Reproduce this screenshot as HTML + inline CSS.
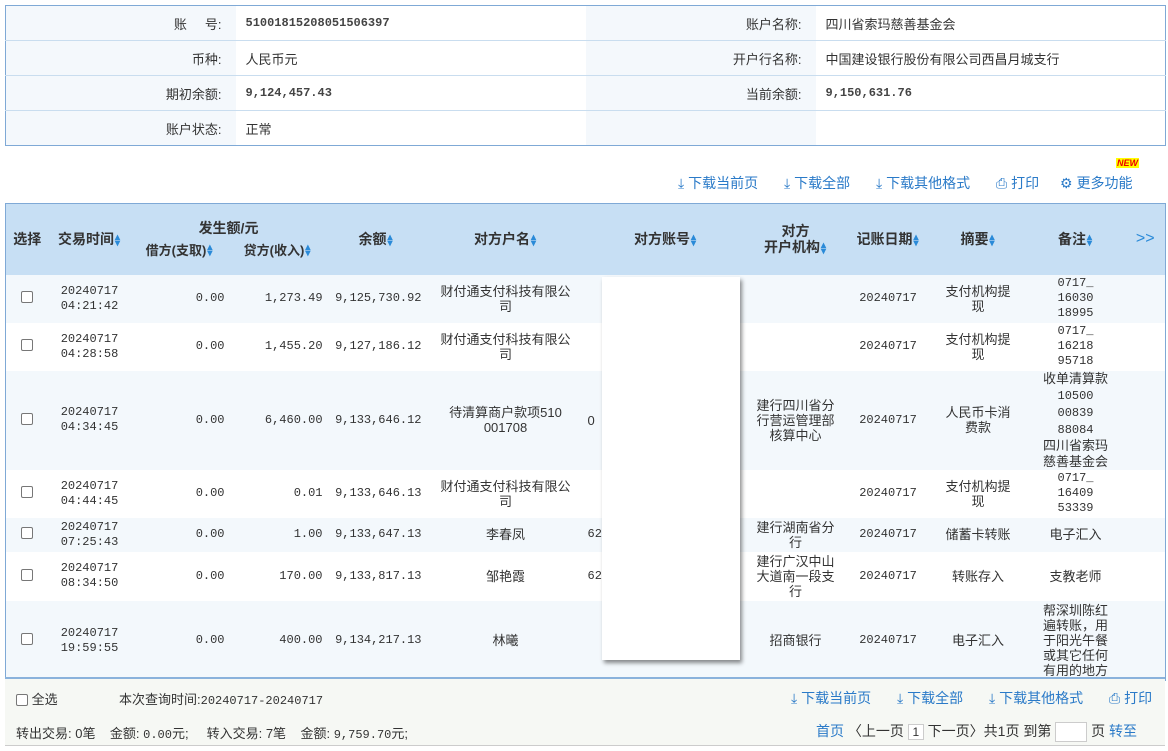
<!DOCTYPE html>
<html><head><meta charset="utf-8">
<style>
*{box-sizing:border-box;margin:0;padding:0}
body{width:1168px;height:751px;background:#fff;font-family:"Liberation Sans","Noto Sans CJK SC",sans-serif;font-size:13px;color:#333;position:relative;overflow:hidden}
.mono{font-family:"Liberation Mono","Noto Sans CJK SC",monospace;font-size:12px}
.info{position:absolute;left:5px;top:5px;width:1160px;border:1px solid #7fa9d6;border-collapse:collapse;table-layout:fixed}
.info td{height:35px;border-top:1px solid #c9ddef;padding:0 10px;white-space:nowrap}
.info tr:first-child td{border-top:none}
.info td.l{background:#f4f8fc;text-align:right;padding-right:14px}
.b{font-weight:bold;color:#444}
.tool{position:absolute;top:173px;color:#2a7ac8;font-size:14px;white-space:nowrap}
.tool span{position:absolute;white-space:nowrap}
.grid{position:absolute;left:5px;top:203px;width:1160px;border:1px solid #7fa9d6;border-bottom:none;border-collapse:collapse;table-layout:fixed}
.grid th{background:#c7dff4;font-weight:bold;color:#333;font-size:14px;padding:0;text-align:center;white-space:nowrap}
.grid td{padding:0 2px;text-align:center;line-height:15px;vertical-align:middle}
.grid tr.a td{background:#f3f8fc}
.s{color:#2a8ad8;font-size:10px;display:inline-block;line-height:6px;vertical-align:middle;width:7px}
.r{text-align:right!important;padding-right:4px!important}
.cb{width:12px;height:12px;border:1px solid #777;border-radius:2px;display:inline-block;background:#fff}
.foot{position:absolute;left:5px;top:677px;width:1160px;height:69px;background:#f6f8f4;border-top:2px solid #8ab2dc;border-bottom:1px solid #ccc}
.foot > span{position:absolute;white-space:nowrap}
.blue{color:#2a7ac8}
</style></head><body>
<table class="info">
<colgroup><col style="width:230px"><col style="width:350px"><col style="width:230px"><col style="width:350px"></colgroup>
<tr><td class="l">账&nbsp;&nbsp;&nbsp;&nbsp;&nbsp;号:</td><td class="b mono">51001815208051506397</td><td class="l">账户名称:</td><td>四川省索玛慈善基金会</td></tr>
<tr><td class="l">币种:</td><td>人民币元</td><td class="l">开户行名称:</td><td>中国建设银行股份有限公司西昌月城支行</td></tr>
<tr><td class="l">期初余额:</td><td class="b mono">9,124,457.43</td><td class="l">当前余额:</td><td class="b mono">9,150,631.76</td></tr>
<tr><td class="l">账户状态:</td><td>正常</td><td class="l"></td><td></td></tr>
</table>

<div class="tool">
<span style="left:678px">⤓ 下载当前页</span>
<span style="left:784px">⤓ 下载全部</span>
<span style="left:876px">⤓ 下载其他格式</span>
<span style="left:996px">⎙ 打印</span>
<span style="left:1060px">⚙ 更多功能</span>
</div>
<div style="position:absolute;left:1116px;top:158px;font-size:9px;font-weight:bold;color:#e00;background:#ff0;line-height:10px;padding:0 1px;font-style:italic">NEW</div>

<table class="grid">
<colgroup><col style="width:43px"><col style="width:82px"><col style="width:98px"><col style="width:98px"><col style="width:99px"><col style="width:160px"><col style="width:160px"><col style="width:100px"><col style="width:85px"><col style="width:95px"><col style="width:100px"><col style="width:40px"></colgroup>
<tr style="height:36px"><th rowspan="2">选择</th><th rowspan="2">交易时间<span class="s">▴<br>▾</span></th><th colspan="2" style="vertical-align:bottom;padding-bottom:2px">发生额/元</th><th rowspan="2">余额<span class="s">▴<br>▾</span></th><th rowspan="2">对方户名<span class="s">▴<br>▾</span></th><th rowspan="2">对方账号<span class="s">▴<br>▾</span></th><th rowspan="2" style="line-height:16px">对方<br>开户机构<span class="s">▴<br>▾</span></th><th rowspan="2">记账日期<span class="s">▴<br>▾</span></th><th rowspan="2">摘要<span class="s">▴<br>▾</span></th><th rowspan="2">备注<span class="s">▴<br>▾</span></th><th rowspan="2" style="color:#2a8ad8;font-weight:normal;font-size:16px">&gt;&gt;</th></tr>
<tr style="height:35px"><th style="vertical-align:top;font-size:13px">借方(支取)<span class="s">▴<br>▾</span></th><th style="vertical-align:top;font-size:13px">贷方(收入)<span class="s">▴<br>▾</span></th></tr>
<tr class="a" style="height:48px"><td><span class="cb"></span></td><td class="mono">20240717<br>04:21:42</td><td class="r mono">0.00</td><td class="r mono">1,273.49</td><td class="r mono">9,125,730.92</td><td>财付通支付科技有限公<br>司</td><td></td><td></td><td class="mono">20240717</td><td>支付机构提<br>现</td><td class="mono">0717_<br>16030<br>18995</td><td></td></tr>
<tr style="height:48px"><td><span class="cb"></span></td><td class="mono">20240717<br>04:28:58</td><td class="r mono">0.00</td><td class="r mono">1,455.20</td><td class="r mono">9,127,186.12</td><td>财付通支付科技有限公<br>司</td><td></td><td></td><td class="mono">20240717</td><td>支付机构提<br>现</td><td class="mono">0717_<br>16218<br>95718</td><td></td></tr>
<tr class="a" style="height:96px"><td><span class="cb"></span></td><td class="mono">20240717<br>04:34:45</td><td class="r mono">0.00</td><td class="r mono">6,460.00</td><td class="r mono">9,133,646.12</td><td>待清算商户款项510<br>001708</td><td style="text-align:left">0</td><td>建行四川省分<br>行营运管理部<br>核算中心</td><td class="mono">20240717</td><td>人民币卡消<br>费款</td><td style="line-height:16px">收单清算款<br><span class="mono">10500<br>00839<br>88084</span><br>四川省索玛<br>慈善基金会</td><td></td></tr>
<tr style="height:48px"><td><span class="cb"></span></td><td class="mono">20240717<br>04:44:45</td><td class="r mono">0.00</td><td class="r mono">0.01</td><td class="r mono">9,133,646.13</td><td>财付通支付科技有限公<br>司</td><td></td><td></td><td class="mono">20240717</td><td>支付机构提<br>现</td><td class="mono">0717_<br>16409<br>53339</td><td></td></tr>
<tr class="a" style="height:34px"><td><span class="cb"></span></td><td class="mono">20240717<br>07:25:43</td><td class="r mono">0.00</td><td class="r mono">1.00</td><td class="r mono">9,133,647.13</td><td>李春凤</td><td style="text-align:left" class="mono">62</td><td>建行湖南省分<br>行</td><td class="mono">20240717</td><td>储蓄卡转账</td><td>电子汇入</td><td></td></tr>
<tr style="height:49px"><td><span class="cb"></span></td><td class="mono">20240717<br>08:34:50</td><td class="r mono">0.00</td><td class="r mono">170.00</td><td class="r mono">9,133,817.13</td><td>邹艳霞</td><td style="text-align:left" class="mono">62</td><td>建行广汉中山<br>大道南一段支<br>行</td><td class="mono">20240717</td><td>转账存入</td><td>支教老师</td><td></td></tr>
<tr class="a" style="height:80px"><td><span class="cb"></span></td><td class="mono">20240717<br>19:59:55</td><td class="r mono">0.00</td><td class="r mono">400.00</td><td class="r mono">9,134,217.13</td><td>林曦</td><td></td><td>招商银行</td><td class="mono">20240717</td><td>电子汇入</td><td>帮深圳陈红<br>遍转账，用<br>于阳光午餐<br>或其它任何<br>有用的地方</td><td></td></tr>
</table>
<div style="position:absolute;left:602px;top:277px;width:138px;height:383px;background:#fff;box-shadow:2px 3px 4px rgba(0,0,0,.45)"></div>

<div class="foot">
<span style="left:11px;top:10px"><span class="cb" style="vertical-align:-2px"></span> 全选</span>
<span style="left:114px;top:10px">本次查询时间:<span class="mono">20240717-20240717</span></span>
<span class="blue" style="left:786px;top:9px;font-size:14px">⤓ 下载当前页</span>
<span class="blue" style="left:892px;top:9px;font-size:14px">⤓ 下载全部</span>
<span class="blue" style="left:984px;top:9px;font-size:14px">⤓ 下载其他格式</span>
<span class="blue" style="left:1104px;top:9px;font-size:14px">⎙ 打印</span>
<span style="left:11px;top:44px">转出交易: 0笔&nbsp;&nbsp;&nbsp;&nbsp;金额: <span class="mono">0.00</span>元;&nbsp;&nbsp;&nbsp;&nbsp;&nbsp;转入交易: 7笔&nbsp;&nbsp;&nbsp;&nbsp;金额: <span class="mono">9,759.70</span>元;</span>
<span style="left:811px;top:42px;font-size:14px"><span class="blue">首页</span> 〈上一页 <span style="display:inline-block;border:1px solid #ccc;background:#fff;width:16px;text-align:center;font-size:12px">1</span> 下一页〉共1页 到第 <span style="display:inline-block;border:1px solid #ccc;background:#fff;width:32px;height:20px;vertical-align:middle"></span> 页 <span class="blue">转至</span></span>
</div>
</body></html>
